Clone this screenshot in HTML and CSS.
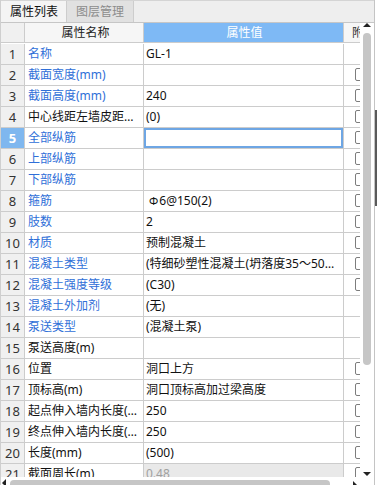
FILE: index.html
```html
<!DOCTYPE html>
<html lang="zh-CN">
<head>
    <meta http-equiv="content-type" content="text/html; charset=utf-8" />
    <title>属性列表</title>
    <link rel="stylesheet" href="styles.css">
</head>
<body>
    <div class="panel">
        <div class="tabs">
            <div class="tab active">属性列表</div>
            <div class="tab">图层管理</div>
        </div>
        <div class="body">
            <div class="grid">
                <div class="row head">
                    <div class="c num"></div>
                    <div class="c name">属性名称</div>
                    <div class="c val">属性值</div>
                    <div class="c att">附</div>
                </div>
                <div class="row"><div class="c num">1</div><div class="c name blue">名称</div><div class="c val">GL-1</div><div class="c att"></div></div>
                <div class="row"><div class="c num">2</div><div class="c name blue">截面宽度(mm)</div><div class="c val"></div><div class="c att"><span class="chk"></span></div></div>
                <div class="row"><div class="c num">3</div><div class="c name blue">截面高度(mm)</div><div class="c val">240</div><div class="c att"><span class="chk"></span></div></div>
                <div class="row"><div class="c num">4</div><div class="c name">中心线距左墙皮距离(mm)</div><div class="c val">(0)</div><div class="c att"><span class="chk"></span></div></div>
                <div class="row"><div class="c num sel">5</div><div class="c name blue">全部纵筋</div><div class="c val edit"></div><div class="c att"><span class="chk"></span></div></div>
                <div class="row"><div class="c num">6</div><div class="c name blue">上部纵筋</div><div class="c val"></div><div class="c att"><span class="chk"></span></div></div>
                <div class="row"><div class="c num">7</div><div class="c name blue">下部纵筋</div><div class="c val"></div><div class="c att"><span class="chk"></span></div></div>
                <div class="row"><div class="c num">8</div><div class="c name blue">箍筋</div><div class="c val"><span class="rebar">Φ</span>6@150(2)</div><div class="c att"><span class="chk"></span></div></div>
                <div class="row"><div class="c num">9</div><div class="c name blue">肢数</div><div class="c val">2</div><div class="c att"><span class="chk"></span></div></div>
                <div class="row"><div class="c num">10</div><div class="c name blue">材质</div><div class="c val">预制混凝土</div><div class="c att"><span class="chk"></span></div></div>
                <div class="row"><div class="c num">11</div><div class="c name blue">混凝土类型</div><div class="c val">(特细砂塑性混凝土(坍落度35～50mm)碎石粒径20mm)</div><div class="c att"><span class="chk"></span></div></div>
                <div class="row"><div class="c num">12</div><div class="c name blue">混凝土强度等级</div><div class="c val">(C30)</div><div class="c att"><span class="chk"></span></div></div>
                <div class="row"><div class="c num">13</div><div class="c name blue">混凝土外加剂</div><div class="c val">(无)</div><div class="c att"></div></div>
                <div class="row"><div class="c num">14</div><div class="c name blue">泵送类型</div><div class="c val">(混凝土泵)</div><div class="c att"></div></div>
                <div class="row"><div class="c num">15</div><div class="c name">泵送高度(m)</div><div class="c val"></div><div class="c att"></div></div>
                <div class="row"><div class="c num">16</div><div class="c name">位置</div><div class="c val">洞口上方</div><div class="c att"><span class="chk"></span></div></div>
                <div class="row"><div class="c num">17</div><div class="c name">顶标高(m)</div><div class="c val">洞口顶标高加过梁高度</div><div class="c att"><span class="chk"></span></div></div>
                <div class="row"><div class="c num">18</div><div class="c name">起点伸入墙内长度(mm)</div><div class="c val">250</div><div class="c att"><span class="chk"></span></div></div>
                <div class="row"><div class="c num">19</div><div class="c name">终点伸入墙内长度(mm)</div><div class="c val">250</div><div class="c att"><span class="chk"></span></div></div>
                <div class="row"><div class="c num">20</div><div class="c name">长度(mm)</div><div class="c val">(500)</div><div class="c att"><span class="chk"></span></div></div>
                <div class="row"><div class="c num">21</div><div class="c name">截面周长(m)</div><div class="c val ro">0.48</div><div class="c att"><span class="chk"></span></div></div>
            </div>
            <div class="vscroll">
                <span class="arr up"></span>
                <span class="vthumb"></span>
                <span class="arr down"></span>
            </div>
        </div>
        <div class="hscroll">
            <span class="arr left"></span>
            <span class="hthumb"></span>
            <span class="arr right"></span>
        </div>
    </div>
    <div class="edge"></div>
</body>
</html>
```

FILE: styles.css
```css
body {margin:0; background:#fff; font-family:"Noto Sans", "Noto Sans CJK SC", sans-serif; font-size:12px; color:#111;}
.panel {width:375px; height:485px; overflow:hidden; border-left:1px solid #cfcfcf; border-right:1px solid #c4c4c4; box-sizing:border-box;}

.tabs {height:23px; box-sizing:border-box; border-top:1px solid #d4d4d4; border-bottom:1px solid #c6c6c6; background:#eeeeee; display:flex;}
.tab {height:21px; line-height:21px; padding:0 9px; color:#8c8c8c; background:#e1e1e1; border-right:1px solid #cdcdcd;}
.tab.active {color:#111; background:#f4f4f4; padding:0 8px 0 9px;}

.body {height:454px; display:flex;}
.grid {width:359px; overflow:hidden;}
.row {display:flex; height:21px;}
.c {flex:none; box-sizing:border-box; height:21px; line-height:20px; border-right:1px solid #cccccc; border-bottom:1px solid #cccccc; white-space:nowrap; overflow:hidden; text-overflow:ellipsis;}
.num {width:24px; text-align:center; background:#f0f0f0; color:#333; font-size:13px;}
.num.sel {background:#7fb7ef; color:#fff; font-weight:bold;}
.name {width:119px; padding-left:3px; padding-right:5px;}
.name.blue {color:#2f6fd8;}
.val {width:200px; padding-left:2px; padding-right:4px;}
.val.edit {box-shadow:inset 0 0 0 2px #6ea6e4;}
.val.ro {background:#e9e9e9; color:#a0a0a0;}
.rebar {font-size:11px; margin:0 1px 0 3px;}
.att {width:40px; border-right:none; padding-left:11px;}
.chk {display:inline-block; width:13px; height:13px; box-sizing:border-box; border:1px solid #7d7d7d; border-radius:2px; vertical-align:-2px;}

.head .c {height:20px; line-height:19px; text-align:center; padding-right:0;}
.head .name {background:#f6f6f6; color:#222;}
.head .val {background:#7eb9f5; color:#fff;}
.head .att {background:#f6f6f6; color:#333; text-align:left; padding-left:8px;}

.vscroll {width:14px; background:#fff; position:relative;}
.vthumb {position:absolute; left:3px; top:10px; width:8px; height:332px; background:#c6c6c6; border-radius:4px;}
.arr {position:absolute; width:0; height:0; border:4px solid transparent;}
.arr.up {left:3px; top:0; border-bottom:4px solid #222; border-top:0;}
.arr.down {left:3px; top:449px; border-top:4px solid #222; border-bottom:0;}

.hscroll {height:13px; background:#fff; position:relative;}
.hthumb {position:absolute; left:9px; top:3px; width:320px; height:8px; background:#c6c6c6; border-radius:4px;}
.arr.left {left:1px; top:2px; border-right:4px solid #222; border-left:0;}
.arr.right {left:352px; top:4px; border-left:4px solid #222; border-right:0;}

.edge {position:absolute; left:375px; top:110px; width:2px; height:96px; background:#5a5a5a;}
```
